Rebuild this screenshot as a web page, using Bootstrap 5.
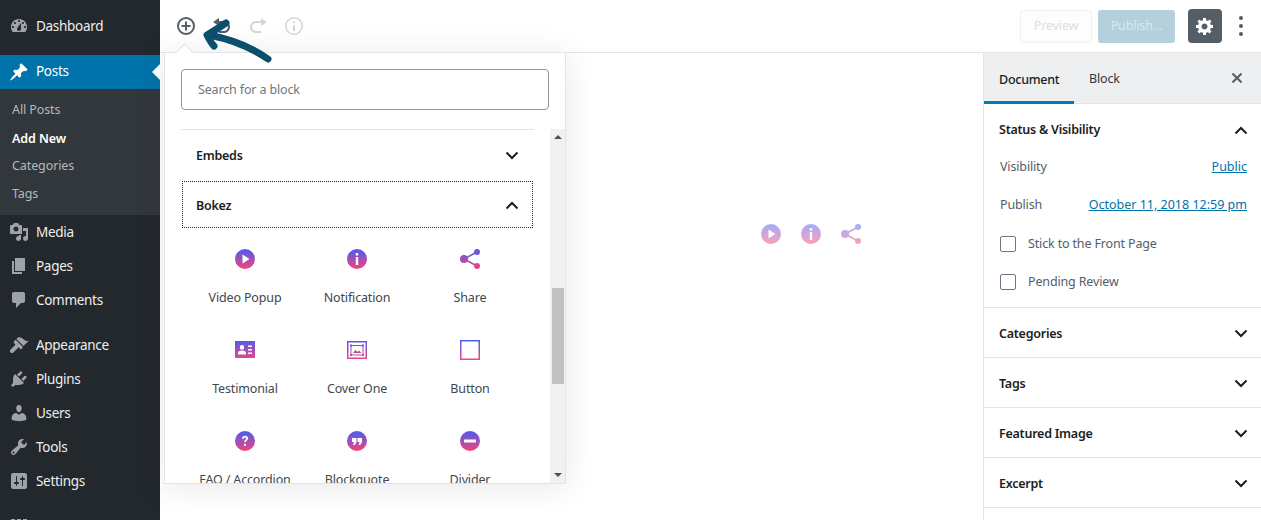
<!DOCTYPE html>
<html lang="en">
<head>
  <meta charset="UTF-8" />
  <meta name="viewport" content="width=device-width, initial-scale=1.0" />
  <title>Add New Post</title>
  <link href="https://cdn.jsdelivr.net/npm/bootstrap@5.3.0/dist/css/bootstrap.min.css" rel="stylesheet" />
  <style>
    html, body { height: 520px; overflow: hidden; }
    body { font-family: "Noto Sans", sans-serif; font-size: 12.5px; letter-spacing: -.15px; line-height: 20px; color: #32373c; background: #fff; }
    .wp-shell { height: 520px; overflow: hidden; }
    .wp-side { width: 160px; flex: none; background: #23282d; color: #eee; font-size: 13.5px; letter-spacing: -.3px; padding-top: 9px; }
    .side-item { height: 34px; padding-left: 9px; gap: 7px; color: #eee; }
    .side-item svg { width: 20px; height: 20px; fill: #9ea3a8; flex: none; }
    .side-gap-a { margin-top: 12px; }
    .side-gap-b { margin-top: 11px; }
    .side-gap-c { margin-top: 12px; }
    .side-active { background: #0073aa; color: #fff; position: relative; }
    .side-active svg { fill: #fff; }
    .side-active span { margin-top: -2px; }
    .side-active::after { content: ""; position: absolute; right: 0; top: 9px; border: 8px solid transparent; border-right-color: #fff; border-left: 0; }
    .side-sub { background: #32373c; height: 126px; padding: 7px 0 0 12px; font-size: 12.5px; letter-spacing: -.1px; color: #b4b9be; }
    .side-sub div { height: 28px; line-height: 28px; }
    .side-sub .now { color: #fff; font-weight: 600; line-height: 30px; }
    .wp-main { min-width: 0; position: relative; }
    .top-bar { height: 53px; border-bottom: 1px solid #e2e4e7; padding: 0 11px 0 16px; }
    .tool-ico { width: 20px; height: 20px; margin-right: 16px; flex: none; }
    .btn-preview { width: 72px; height: 33px; border: 1px solid #eff0f1; border-radius: 3px; color: #dcdfe1; background: #fdfdfd; }
    .btn-publish { width: 77px; height: 33px; border-radius: 3px; background: #b4d0dd; color: #d8e7ee; margin-left: 6px; }
    .btn-gear { width: 34px; height: 34px; border-radius: 4px; background: #555d66; margin-left: 13px; }
    .kebab { width: 4px; margin-left: 17px; gap: 4px; margin-right: 7px; }
    .kebab i { display: block; width: 4px; height: 4px; border-radius: 50%; background: #555d66; }
    .editor-body { flex: 1; min-height: 0; }
    .canvas { flex: 1; min-width: 0; padding: 171px 0 0 601px; gap: 20px; opacity: .5; }
    .grad-ico { width: 20px; height: 20px; display: block; }
    .right-panel { width: 278px; flex: none; border-left: 1px solid #e2e4e7; }
    .panel-tabs { height: 51px; background: #edeff0; border-bottom: 1px solid #e2e4e7; padding-right: 19px; }
    .panel-tab { height: 51px; padding: 0 15px; }
    .panel-tab.on { color: #191e23; font-weight: 500; letter-spacing: -.25px; width: 90px; border-bottom: 3px solid #007cba; line-height: 54px; }
    .panel-tab.off { line-height: 52px; }
    .status-box { height: 204px; border-bottom: 1px solid #e2e4e7; padding: 16px 13px 0 15px; }
    .panel-head { font-weight: 600; letter-spacing: -.25px; color: #191e23; }
    .chev { width: 14px; height: 9px; flex: none; }
    .status-row { color: #555d66; padding: 0 1px; }
    .status-row a { color: #0073aa; letter-spacing: 0; }
    .row-visibility { margin-top: 17px; }
    .row-publish { margin-top: 18px; }
    .row-stick { margin-top: 19px; }
    .row-pending { margin-top: 18px; }
    .fake-check { width: 16px; height: 16px; border: 1.5px solid #6c7781; border-radius: 2px; flex: none; margin-right: 12px; }
    .panel-row { height: 50px; border-bottom: 1px solid #e2e4e7; padding: 1px 13px 0 15px; font-weight: 600; letter-spacing: -.25px; color: #191e23; }
    .panel-row span { padding-top: 2px; }
    .inserter { position: absolute; left: 4px; top: 52px; width: 402px; height: 432px; background: #fff; border: 1px solid #e2e4e7; box-shadow: 0 3px 30px rgba(25, 30, 35, .1); z-index: 2; }
    .inserter::before { content: ""; position: absolute; left: 13px; top: -7px; width: 13px; height: 13px; background: #fff; border-left: 1px solid #e2e4e7; border-top: 1px solid #e2e4e7; transform: rotate(45deg); }
    .search-wrap { padding: 16px 16px 0; height: 76px; }
    .search-field { height: 41px; border: 1px solid #8d96a0; border-radius: 4px; padding-left: 16px; color: #72777c; }
    .block-scroll { height: 354px; overflow: hidden; position: relative; }
    .block-list { width: 385px; flex: none; height: 354px; overflow: hidden; padding-left: 16px; }
    .group-line { width: 353px; height: 52px; border-top: 1px solid #e2e4e7; padding: 0 15px; font-weight: 600; letter-spacing: -.25px; color: #191e23; }
    .group-focus { width: 351px; height: 47px; margin-left: 1px; border: 1px dotted #23282d; padding: 1px 13px 0; font-weight: 600; letter-spacing: -.25px; color: #191e23; }
    .group-focus span { padding-top: 2px; }
    .block-grid { display: grid; grid-template-columns: 112px 112px 114px; grid-auto-rows: 91px; padding: 21px 0 0 8px; }
    .block-cell { gap: 19px; color: #3f4750; white-space: nowrap; }
    .fake-scroll { width: 15px; flex: none; background: #f1f1f1; }
    .scroll-thumb { width: 12px; height: 96px; background: #c1c1c1; margin: 143px 1px 0 2px; }
    .scroll-up, .scroll-down { height: 16px; }
    .scroll-up i, .scroll-down i { width: 0; height: 0; border-left: 4px solid transparent; border-right: 4px solid transparent; }
    .scroll-up i { border-bottom: 4px solid #505050; }
    .scroll-down i { border-top: 4px solid #505050; }
    .hand-arrow { position: absolute; left: 40px; top: 18px; width: 80px; height: 50px; z-index: 3; }
  </style>
</head>
<body>
  <div class="wp-shell d-flex">

    <!-- admin menu -->
    <div class="wp-side">
      <div class="side-item d-flex align-items-center"><svg viewBox="0 0 20 20"><path fill-rule="evenodd" d="M3.76 16h12.48c1.1-1.37 1.76-3.11 1.76-5 0-4.42-3.58-8-8-8s-8 3.58-8 8c0 1.89.66 3.63 1.76 5zM10 4c.55 0 1 .45 1 1s-.45 1-1 1-1-.45-1-1 .45-1 1-1zM6 6c.55 0 1 .45 1 1s-.45 1-1 1-1-.45-1-1 .45-1 1-1zm8 0c.55 0 1 .45 1 1s-.45 1-1 1-1-.45-1-1 .45-1 1-1zm-5.37 5.55L12 7v6c0 1.1-.9 2-2 2s-2-.9-2-2c0-.57.24-1.08.63-1.45zM4 10c.55 0 1 .45 1 1s-.45 1-1 1-1-.45-1-1 .45-1 1-1zm12 0c.55 0 1 .45 1 1s-.45 1-1 1-1-.45-1-1 .45-1 1-1z"/></svg><span>Dashboard</span></div>
      <div class="side-item side-active side-gap-a d-flex align-items-center"><svg viewBox="0 0 20 20"><path d="M10.44 3.02l1.82-1.82 6.36 6.35-1.83 1.82c-1.05-.68-2.48-.57-3.41.36l-.75.75c-.92.93-1.04 2.35-.35 3.41l-1.83 1.82-2.41-2.41-2.8 2.79c-.42.42-3.38 2.71-3.8 2.29s1.86-3.39 2.28-3.81l2.79-2.79L4.1 9.36l1.83-1.82c1.05.69 2.48.57 3.4-.36l.75-.75c.93-.92 1.05-2.35.36-3.41z"/></svg><span>Posts</span></div>
      <div class="side-sub">
        <div>All Posts</div>
        <div class="now">Add New</div>
        <div>Categories</div>
        <div>Tags</div>
      </div>
      <div class="side-item d-flex align-items-center"><svg viewBox="0 0 20 20"><path fill-rule="evenodd" d="M13 11V4c0-.55-.45-1-1-1h-1.67L9 1H5L3.67 3H2c-.55 0-1 .45-1 1v7c0 .55.45 1 1 1h10c.55 0 1-.45 1-1zM7 4.5c1.38 0 2.5 1.12 2.5 2.5S8.38 9.5 7 9.5 4.5 8.38 4.5 7 5.62 4.5 7 4.5zM14 6h5v10.5c0 1.38-1.12 2.5-2.5 2.5S14 17.88 14 16.5s1.12-2.5 2.5-2.5c.17 0 .34.02.5.05V9h-3V6zm-4 8.05V13h2v3.5c0 1.38-1.12 2.5-2.5 2.5S7 17.88 7 16.5 8.12 14 9.5 14c.17 0 .34.02.5.05z"/></svg><span>Media</span></div>
      <div class="side-item d-flex align-items-center"><svg viewBox="0 0 20 20"><path d="M6 15V2h10v13H6zm-1 1h8v2H3V5h2v11z"/></svg><span>Pages</span></div>
      <div class="side-item d-flex align-items-center"><svg viewBox="0 0 20 20"><path d="M5 2h9c1.1 0 2 .9 2 2v7c0 1.1-.9 2-2 2h-2l-5 5v-5H5c-1.1 0-2-.9-2-2V4c0-1.1.9-2 2-2z"/></svg><span>Comments</span></div>
      <div class="side-item side-gap-b d-flex align-items-center"><svg viewBox="0 0 20 20"><path d="M14.48 11.06L7.41 3.99l1.5-1.5c.5-.56 2.3-.47 3.51.32 1.21.8 1.43 1.28 2.91 2.1 1.18.64 2.45 1.26 4.45.85zm-.71.71L6.7 4.7 4.93 6.47c-.39.39-.39 1.02 0 1.41l1.06 1.06c.39.39.39 1.03 0 1.42L1.5 14.5c-.8.8-.8 2.1 0 2.9s2.1.8 2.9 0l4.5-4.5c.39-.39 1.03-.39 1.42 0l1.06 1.06c.39.39 1.02.39 1.41 0z"/></svg><span>Appearance</span></div>
      <div class="side-item d-flex align-items-center"><svg viewBox="0 0 20 20"><path d="M13.11 4.36L9.87 7.6 8 5.73l3.24-3.24c.35-.34 1.05-.2 1.56.32.52.51.66 1.21.31 1.55zm-8 1.77l.91-1.12 9.01 9.01-1.19.84c-.71.71-2.63 1.16-3.82 1.16H6.14L4.9 17.26c-.59.59-1.54.59-2.12 0-.59-.58-.59-1.53 0-2.12l1.24-1.24v-3.88c0-1.13.4-3.19 1.09-3.89zm7.26 3.97l3.24-3.24c.34-.35 1.04-.21 1.55.31.52.51.66 1.21.31 1.55l-3.24 3.25z"/></svg><span>Plugins</span></div>
      <div class="side-item d-flex align-items-center"><svg viewBox="0 0 20 20"><path d="M10 9.25c-2.27 0-2.73-3.44-2.73-3.44C7 4.02 7.82 2 9.97 2c2.16 0 2.98 2.02 2.71 3.81 0 0-.41 3.44-2.68 3.44zm0 2.57L12.72 10c2.39 0 4.52 2.33 4.52 4.53v2.49s-3.65 1.13-7.24 1.13c-3.65 0-7.24-1.13-7.24-1.13v-2.49c0-2.25 1.94-4.48 4.47-4.48z"/></svg><span>Users</span></div>
      <div class="side-item d-flex align-items-center"><svg viewBox="0 0 20 20"><path fill-rule="evenodd" d="M16.68 9.77c-1.34 1.34-3.3 1.67-4.95.99l-5.41 6.52c-.99.99-2.59.99-3.58 0s-.99-2.59 0-3.57l6.52-5.42c-.68-1.65-.35-3.61.99-4.95 1.28-1.28 3.12-1.62 4.72-1.06l-2.89 2.89 2.82 2.82 2.86-2.87c.53 1.58.18 3.39-1.08 4.65zM3.81 16.21c.4.39 1.04.39 1.43 0 .4-.4.4-1.04 0-1.43-.39-.4-1.03-.4-1.43 0-.39.39-.39 1.03 0 1.43z"/></svg><span>Tools</span></div>
      <div class="side-item d-flex align-items-center"><svg viewBox="0 0 20 20"><path fill-rule="evenodd" d="M18 16V4c0-1.1-.9-2-2-2H4c-1.1 0-2 .9-2 2v12c0 1.1.9 2 2 2h12c1.1 0 2-.9 2-2zM8 11h1c.55 0 1 .45 1 1s-.45 1-1 1H8v1.5c0 .28-.22.5-.5.5s-.5-.22-.5-.5V13H6c-.55 0-1-.45-1-1s.45-1 1-1h1V5.5c0-.28.22-.5.5-.5s.5.22.5.5V11zm5-2h-1c-.55 0-1-.45-1-1s.45-1 1-1h1V5.5c0-.28.22-.5.5-.5s.5.22.5.5V7h1c.55 0 1 .45 1 1s-.45 1-1 1h-1v5.5c0 .28-.22.5-.5.5s-.5-.22-.5-.5V9z"/></svg><span>Settings</span></div>
      <div class="side-item side-gap-c d-flex align-items-center"><svg viewBox="0 0 20 20"><path d="M2 2h4v4H2zM8 2h4v4H8zM14 2h4v4h-4zM2 8h4v4H2zM8 8h4v4H8zM14 8h4v4h-4z"/></svg></div>
    </div>

    <div class="wp-main flex-grow-1 d-flex flex-column">
      <!-- editor toolbar -->
      <div class="top-bar d-flex align-items-center">
        <svg class="tool-ico" viewBox="0 0 20 20" fill="none" stroke="#555d66" stroke-width="2"><circle cx="10" cy="10" r="8"/><path d="M10 5.5v9M5.5 10h9"/></svg>
        <svg class="tool-ico" viewBox="0 0 20 20" fill="#555d66"><path d="M12 5H7V2L1 6l6 4V7h5c2.2 0 4 1.8 4 4s-1.8 4-4 4H7v2h5c3.3 0 6-2.7 6-6s-2.7-6-6-6z"/></svg>
        <svg class="tool-ico" viewBox="0 0 20 20" fill="#d4d7da"><path d="M8 5h5V2l6 4-6 4V7H8c-2.2 0-4 1.8-4 4s1.8 4 4 4h5v2H8c-3.3 0-6-2.7-6-6s2.7-6 6-6z"/></svg>
        <svg class="tool-ico" viewBox="0 0 20 20" fill="none" stroke="#d4d7da" stroke-width="1.6"><circle cx="10" cy="10" r="8.2"/><path d="M10 9v6M10 5.2v2" stroke-width="2"/></svg>
        <div class="ms-auto d-flex align-items-center">
          <div class="btn-preview d-flex align-items-center justify-content-center">Preview</div>
          <div class="btn-publish d-flex align-items-center justify-content-center">Publish...</div>
          <div class="btn-gear d-flex align-items-center justify-content-center">
            <svg width="20" height="20" viewBox="0 0 20 20" fill="#fff"><path fill-rule="evenodd" d="M18 12h-2.18c-.17.7-.44 1.35-.81 1.93l1.54 1.54-2.1 2.1-1.54-1.54c-.58.36-1.23.63-1.91.79V19H8v-2.18c-.68-.16-1.33-.43-1.91-.79l-1.54 1.54-2.12-2.12 1.54-1.54c-.36-.58-.63-1.23-.79-1.91H1V9.03h2.17c.16-.7.44-1.35.8-1.94L2.43 5.55l2.1-2.1 1.54 1.54c.58-.37 1.24-.64 1.93-.81V2h3v2.18c.68.16 1.33.43 1.91.79l1.54-1.54 2.12 2.12-1.54 1.54c.36.59.64 1.24.8 1.94H18V12zm-8.5 1.5c1.66 0 3-1.34 3-3s-1.34-3-3-3-3 1.34-3 3 1.34 3 3 3z"/></svg>
          </div>
          <div class="kebab d-flex flex-column"><i></i><i></i><i></i></div>
        </div>
      </div>

      <div class="editor-body d-flex">
        <div class="canvas d-flex align-items-start">
          <svg class="grad-ico" viewBox="0 0 20 20"><defs><linearGradient id="blockGrad" gradientUnits="userSpaceOnUse" x1="0" y1="0" x2="0" y2="20"><stop offset="0" stop-color="#4a5cf2"/><stop offset="1" stop-color="#f7437a"/></linearGradient></defs><path fill="url(#blockGrad)" fill-rule="evenodd" d="M10 0a10 10 0 1 1 0 20 10 10 0 0 1 0-20zM7.500 5.500v9l7-4.500z"/></svg>
          <svg class="grad-ico" viewBox="0 0 20 20"><path fill="url(#blockGrad)" fill-rule="evenodd" d="M10 0a10 10 0 1 1 0 20 10 10 0 0 1 0-20zM8.800 8v8h2.400V8zM8.800 4v2.400h2.400V4z"/></svg>
          <svg class="grad-ico" viewBox="0 0 20 20"><g fill="url(#blockGrad)"><circle cx="4" cy="10" r="4"/><circle cx="17" cy="3" r="3"/><circle cx="17" cy="17" r="3"/></g><path d="M4 10l13-7M4 10l13 7" stroke="url(#blockGrad)" stroke-width="1.600" fill="none"/></svg>
        </div>

        <!-- settings sidebar -->
        <div class="right-panel">
          <div class="panel-tabs d-flex align-items-start">
            <div class="panel-tab on">Document</div>
            <div class="panel-tab off">Block</div>
            <svg class="ms-auto align-self-center" width="10" height="10" viewBox="0 0 10 10" stroke="#555d66" stroke-width="2"><path d="M.5.5l9 9M9.500.5l-9 9"/></svg>
          </div>
          <div class="status-box">
            <div class="panel-head d-flex align-items-center justify-content-between"><span>Status &amp; Visibility</span><svg class="chev" viewBox="0 0 14 9" fill="none" stroke="#191e23" stroke-width="2"><path d="M1.500 7.500L7 2l5.500 5.500"/></svg></div>
            <div class="status-row row-visibility d-flex justify-content-between"><span>Visibility</span><a href="#">Public</a></div>
            <div class="status-row row-publish d-flex justify-content-between"><span>Publish</span><a href="#">October 11, 2018 12:59 pm</a></div>
            <div class="status-row row-stick d-flex align-items-center"><div class="fake-check"></div><span>Stick to the Front Page</span></div>
            <div class="status-row row-pending d-flex align-items-center"><div class="fake-check"></div><span>Pending Review</span></div>
          </div>
          <div class="panel-row d-flex align-items-center justify-content-between"><span>Categories</span><svg class="chev" viewBox="0 0 14 9" fill="none" stroke="#191e23" stroke-width="2"><path d="M1.500 1.500L7 7l5.500-5.500"/></svg></div>
          <div class="panel-row d-flex align-items-center justify-content-between"><span>Tags</span><svg class="chev" viewBox="0 0 14 9" fill="none" stroke="#191e23" stroke-width="2"><path d="M1.500 1.500L7 7l5.500-5.500"/></svg></div>
          <div class="panel-row d-flex align-items-center justify-content-between"><span>Featured Image</span><svg class="chev" viewBox="0 0 14 9" fill="none" stroke="#191e23" stroke-width="2"><path d="M1.500 1.500L7 7l5.500-5.500"/></svg></div>
          <div class="panel-row d-flex align-items-center justify-content-between"><span>Excerpt</span><svg class="chev" viewBox="0 0 14 9" fill="none" stroke="#191e23" stroke-width="2"><path d="M1.500 1.500L7 7l5.500-5.500"/></svg></div>
        </div>
      </div>

      <!-- block inserter popover -->
      <div class="inserter">
        <div class="search-wrap"><div class="search-field d-flex align-items-center">Search for a block</div></div>
        <div class="block-scroll d-flex">
          <div class="block-list">
            <div class="group-line d-flex align-items-center justify-content-between"><span>Embeds</span><svg class="chev" viewBox="0 0 14 9" fill="none" stroke="#191e23" stroke-width="2"><path d="M1.500 1.500L7 7l5.500-5.500"/></svg></div>
            <div class="group-focus d-flex align-items-center justify-content-between"><span>Bokez</span><svg class="chev" viewBox="0 0 14 9" fill="none" stroke="#191e23" stroke-width="2"><path d="M1.500 7.500L7 2l5.500 5.500"/></svg></div>
            <div class="block-grid">
              <div class="block-cell d-flex flex-column align-items-center">
                <svg class="grad-ico" viewBox="0 0 20 20"><path fill="url(#blockGrad)" fill-rule="evenodd" d="M10 0a10 10 0 1 1 0 20 10 10 0 0 1 0-20zM7.500 5.500v9l7-4.500z"/></svg>
                <span>Video Popup</span>
              </div>
              <div class="block-cell d-flex flex-column align-items-center">
                <svg class="grad-ico" viewBox="0 0 20 20"><path fill="url(#blockGrad)" fill-rule="evenodd" d="M10 0a10 10 0 1 1 0 20 10 10 0 0 1 0-20zM8.800 8v8h2.400V8zM8.800 4v2.400h2.400V4z"/></svg>
                <span>Notification</span>
              </div>
              <div class="block-cell d-flex flex-column align-items-center">
                <svg class="grad-ico" viewBox="0 0 20 20"><g fill="url(#blockGrad)"><circle cx="4" cy="10" r="4"/><circle cx="17" cy="3" r="3"/><circle cx="17" cy="17" r="3"/></g><path d="M4 10l13-7M4 10l13 7" stroke="url(#blockGrad)" stroke-width="1.600" fill="none"/></svg>
                <span>Share</span>
              </div>
              <div class="block-cell d-flex flex-column align-items-center">
                <svg class="grad-ico" viewBox="0 0 20 20"><path fill="url(#blockGrad)" fill-rule="evenodd" d="M0 1h20v17H0zM7 5a2.200 2.400 0 1 0 0 4.800A2.200 2.400 0 0 0 7 5zM3 14.500h8V13c0-1.500-1.500-2.500-4-2.500S3 11.500 3 13zM13 5.500v1.400h4V5.500zM13 9v1.400h4V9zM13 12.500v1.400h4v-1.400z"/></svg>
                <span>Testimonial</span>
              </div>
              <div class="block-cell d-flex flex-column align-items-center">
                <svg class="grad-ico" viewBox="0 0 20 20"><path fill="url(#blockGrad)" fill-rule="evenodd" d="M0 1h20v18H0zM1.500 2.500v15h17v-15z"/><path fill="none" stroke="url(#blockGrad)" d="M4 5.500h12v9.500H4z"/><path fill="url(#blockGrad)" d="M6 13l2.500-3 2 2 1.500-1.500L14.500 13zM3 4.500h2v2H3zM15 4.500h2v2h-2zM3 14h2v2H3zM15 14h2v2h-2z"/></svg>
                <span>Cover One</span>
              </div>
              <div class="block-cell d-flex flex-column align-items-center">
                <svg class="grad-ico" viewBox="0 0 20 20"><path fill="none" stroke="url(#blockGrad)" stroke-width="1.500" d="M.75.75h18.500v18.500H.75z"/></svg>
                <span>Button</span>
              </div>
              <div class="block-cell d-flex flex-column align-items-center">
                <svg class="grad-ico" viewBox="0 0 20 20"><path fill="url(#blockGrad)" fill-rule="evenodd" d="M10 0a10 10 0 1 1 0 20 10 10 0 0 1 0-20zM7 7.800h1.900c0-.8.400-1.300 1.100-1.300s1.100.4 1.100 1c0 1.200-2 1.500-2 3.500h1.900c0-1.500 2.100-1.700 2.100-3.700 0-1.500-1.200-2.500-3-2.500-2 0-3.100 1.100-3.100 3zM9 12.800v2h2v-2z"/></svg>
                <span>FAQ / Accordion</span>
              </div>
              <div class="block-cell d-flex flex-column align-items-center">
                <svg class="grad-ico" viewBox="0 0 20 20"><path fill="url(#blockGrad)" fill-rule="evenodd" d="M10 0a10 10 0 1 1 0 20 10 10 0 0 1 0-20zM5 7v4h2l-1 3h1.800L9.500 11V7zM10.500 7v4h2l-1 3h1.800L15 11V7z"/></svg>
                <span>Blockquote</span>
              </div>
              <div class="block-cell d-flex flex-column align-items-center">
                <svg class="grad-ico" viewBox="0 0 20 20"><path fill="url(#blockGrad)" fill-rule="evenodd" d="M10 0a10 10 0 1 1 0 20 10 10 0 0 1 0-20zM4 8.500v3h12v-3z"/></svg>
                <span>Divider</span>
              </div>
            </div>
          </div>
          <div class="fake-scroll d-flex flex-column">
            <div class="scroll-up d-flex align-items-center justify-content-center"><i></i></div>
            <div class="flex-grow-1"><div class="scroll-thumb"></div></div>
            <div class="scroll-down d-flex align-items-center justify-content-center"><i></i></div>
          </div>
        </div>
      </div>

      <!-- hand drawn pointer -->
      <svg class="hand-arrow" viewBox="0 0 80 50" fill="none" stroke="#0b4f6c" stroke-width="7" stroke-linecap="round" stroke-linejoin="round">
        <path d="M68 41C58 34 40 23 9 17"/>
        <path d="M26 5C20 9 14 13 7 17C9 21 11 25 14 28"/>
      </svg>
    </div>
  </div>

  <script src="https://cdn.jsdelivr.net/npm/bootstrap@5.3.0/dist/js/bootstrap.bundle.min.js"></script>
</body>
</html>
